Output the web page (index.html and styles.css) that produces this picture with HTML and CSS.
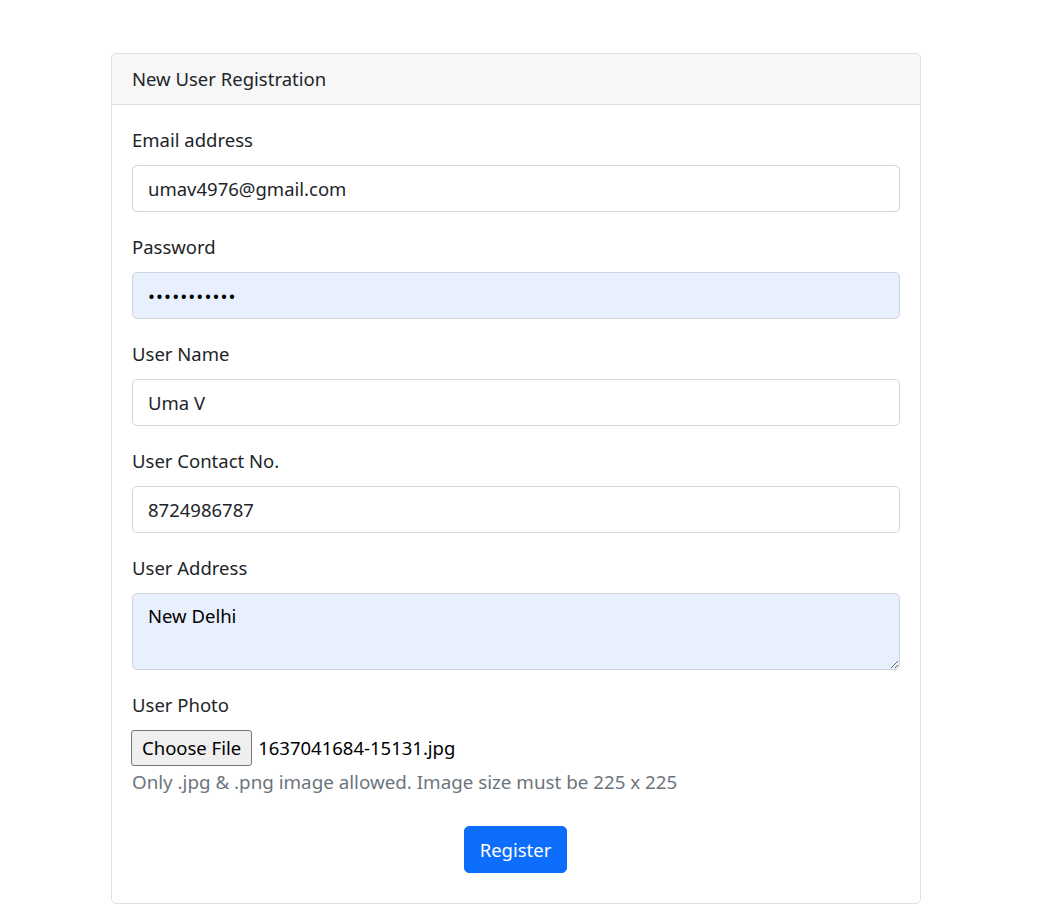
FILE: index.html
```html
<!DOCTYPE html>
<html lang="en">
<head>
<meta charset="utf-8">
<title>New User Registration</title>
<link rel="stylesheet" href="styles.css">
</head>
<body>
<div class="page">
  <div class="card">
    <div class="card-header">New User Registration</div>
    <form class="card-body">
      <div class="group">
        <label class="label" for="email">Email address</label>
        <input class="control" id="email" type="email" value="umav4976@gmail.com">
      </div>
      <div class="group">
        <label class="label" for="pwd">Password</label>
        <input class="control autofill pwd" id="pwd" type="password" value="abcdefghijk">
      </div>
      <div class="group">
        <label class="label" for="name">User Name</label>
        <input class="control" id="name" type="text" value="Uma V">
      </div>
      <div class="group">
        <label class="label" for="contact">User Contact No.</label>
        <input class="control" id="contact" type="text" value="8724986787">
      </div>
      <div class="group">
        <label class="label" for="addr">User Address</label>
        <textarea class="control autofill area" id="addr" rows="2">New Delhi</textarea>
      </div>
      <div class="group photo">
        <label class="label">User Photo</label>
        <div class="file-row">
          <button type="button" class="file-btn">Choose File</button>
          <span class="file-name">1637041684-15131.jpg</span>
        </div>
        <div class="form-text">Only .jpg &amp; .png image allowed. Image size must be 225 x 225</div>
      </div>
      <div class="actions">
        <button type="button" class="btn-primary">Register</button>
      </div>
    </form>
  </div>
</div>
</body>
</html>
```
FILE: styles.css
```css
* { box-sizing: border-box; }
html, body { margin: 0; padding: 0; background: #fff; }
body {
  font-family: "Noto Sans", "Open Sans", sans-serif;
  font-size: 18.5px;
  line-height: 30px;
  color: #212529;
}
.page {
  padding: 53px 0 0 111px;
}
.card {
  width: 810px;
  border: 1px solid #dfdfdf;
  border-radius: 5px;
  background: #fff;
}
.card-header {
  padding: 10px 20px;
  height: 51px;
  background: #f7f7f7;
  border-bottom: 1px solid #dfdfdf;
  border-radius: 5px 5px 0 0;
  line-height: 30px;
}
.card-body {
  margin: 0;
  padding: 20px 20px 30px;
}
.group {
  margin-bottom: 20px;
}
.label {
  display: block;
  height: 30px;
  line-height: 30px;
  margin-bottom: 10px;
}
.control {
  display: block;
  width: 100%;
  height: 47px;
  padding: 7.5px 15px;
  font: inherit;
  line-height: 30px;
  color: #212529;
  background: #fff;
  border: 1px solid #ced4da;
  border-radius: 5px;
  outline: none;
}
.autofill {
  background: #e8f0fe;
  color: #000;
}
.pwd {
  letter-spacing: 1.1px;
}
.area {
  height: 77px;
  resize: vertical;
  padding-top: 7px;
}
.photo {
  margin-bottom: 31px;
}
.file-row {
  display: flex;
  align-items: center;
  height: 36px;
}
.file-btn {
  height: 36px;
  margin: 0 6px 0 -1px;
  padding: 0 10px;
  font: inherit;
  line-height: 30px;
  color: #000;
  background: #efefef;
  border: 1px solid #767676;
  border-radius: 3px;
}
.file-name {
  color: #000;
}
.form-text {
  margin-top: 3px;
  font-size: 18.8px;
  line-height: 26px;
  color: #6c757d;
}
.actions {
  display: flex;
  justify-content: center;
}
.btn-primary {
  height: 47px;
  padding: 7.5px 15px;
  font: inherit;
  line-height: 30px;
  color: #fff;
  background: #0d6efd;
  border: 1px solid #0d6efd;
  border-radius: 5px;
  margin-left: -1px;
}
```
